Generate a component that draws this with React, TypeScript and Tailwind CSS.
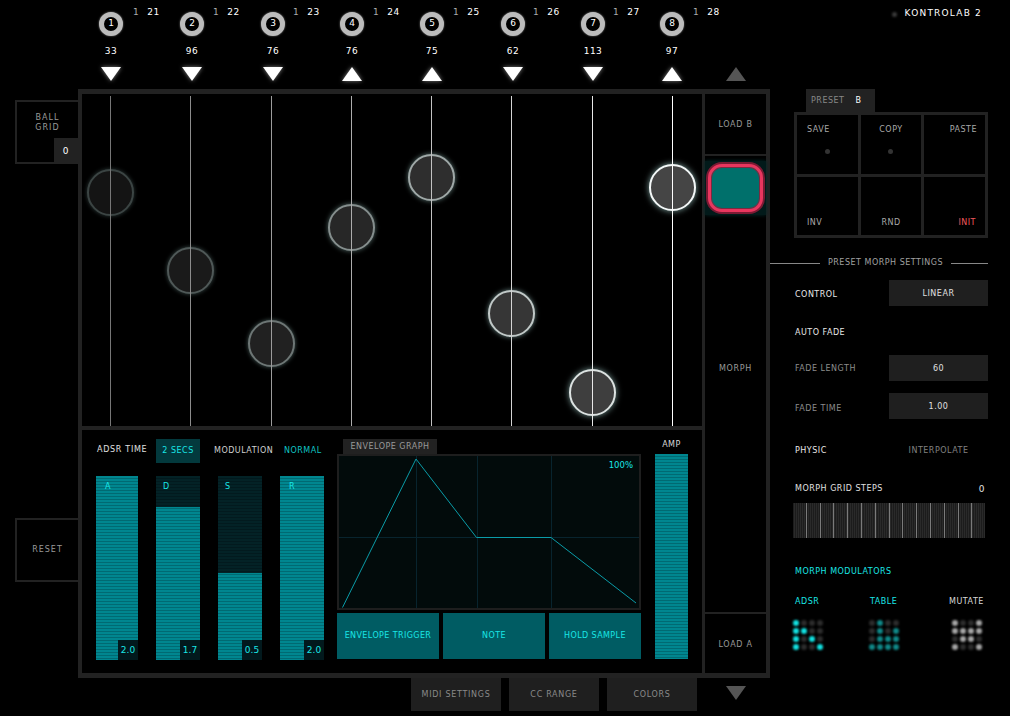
const channels = [
  { n: 1, cc: 21, value: 33, up: false, shift: 'ml-0' },
  { n: 2, cc: 22, value: 96, up: false, shift: 'ml-[1px]' },
  { n: 3, cc: 23, value: 76, up: false, shift: 'ml-[2px]' },
  { n: 4, cc: 24, value: 76, up: true, shift: 'ml-[1px]' },
  { n: 5, cc: 25, value: 75, up: true, shift: 'ml-[1px]' },
  { n: 6, cc: 26, value: 62, up: false, shift: 'ml-[2px]' },
  { n: 7, cc: 27, value: 113, up: false, shift: 'ml-[2px]' },
  { n: 8, cc: 28, value: 97, up: true, shift: 'ml-[1px]' },
]

const strings = [
  { x: 'left-[28px]', line: 'bg-[#777]' },
  { x: 'left-[108px]', line: 'bg-[#8c8c8c]' },
  { x: 'left-[189px]', line: 'bg-[#9c9c9c]' },
  { x: 'left-[269px]', line: 'bg-[#adadad]' },
  { x: 'left-[349px]', line: 'bg-[#c2c2c2]' },
  { x: 'left-[429px]', line: 'bg-[#d4d4d4]' },
  { x: 'left-[510px]', line: 'bg-[#e8e8e8]' },
  { x: 'left-[590px]', line: 'bg-white' },
]

const balls = [
  'left-[5px] top-[75px] bg-[#141414] border-[#3b4443] shadow-[0_0_4px_#2d3a39]',
  'left-[85px] top-[153px] bg-[#1a1a1a] border-[#4f5857] shadow-[0_0_4px_#3a4a49]',
  'left-[166px] top-[226px] bg-[#212121] border-[#6d7675] shadow-[0_0_4px_#465a58]',
  'left-[246px] top-[110px] bg-[#272727] border-[#858e8d] shadow-[0_0_5px_#526866]',
  'left-[326px] top-[60px] bg-[#2e2e2e] border-[#9fa8a7] shadow-[0_0_5px_#5c7472]',
  'left-[406px] top-[196px] bg-[#363636] border-[#c0c8c7] shadow-[0_0_5px_#688280]',
  'left-[487px] top-[275px] bg-[#3e3e3e] border-[#dce2e1] shadow-[0_0_6px_#749290]',
  'left-[567px] top-[70px] bg-[#454545] border-[#f4f8f8] shadow-[0_0_6px_#80a2a0]',
]

const stripe = 'bg-[repeating-linear-gradient(180deg,#00868f_0,#00868f_2px,#006a72_2px,#006a72_3px)]'

const adsr = [
  { label: 'A', value: '2.0', width: 'w-[42px]', gap: 'ml-0', empty: 'h-0', labelX: 'left-[9px]' },
  { label: 'D', value: '1.7', width: 'w-[44px]', gap: 'ml-[18px]', empty: 'h-[31px]', labelX: 'left-[7px]' },
  { label: 'S', value: '0.5', width: 'w-[44px]', gap: 'ml-[18px]', empty: 'h-[97px]', labelX: 'left-[7px]' },
  { label: 'R', value: '2.0', width: 'w-[44px]', gap: 'ml-[18px]', empty: 'h-0', labelX: 'left-[9px]' },
]

const presetCells = [
  { label: 'SAVE', dot: '-translate-x-[5px]', align: 'items-start pl-[10px]', text: 'text-[#a8a8a8]', top: true },
  { label: 'COPY', dot: 'translate-x-0', align: 'items-center', text: 'text-[#a8a8a8]', top: true },
  { label: 'PASTE', dot: '', align: 'items-end pr-[8px]', text: 'text-[#a8a8a8]', top: true },
  { label: 'INV', dot: '', align: 'items-start pl-[10px]', text: 'text-[#a8a8a8]', top: false },
  { label: 'RND', dot: '', align: 'items-center', text: 'text-[#a8a8a8]', top: false },
  { label: 'INIT', dot: '', align: 'items-end pr-[9px]', text: 'text-[#f0585c]', top: false },
]

const modulators = [
  {
    label: 'ADSR',
    labelClass: 'ml-[2px] text-[#19e6e6]',
    on: 'bg-[#12e4e4]',
    shift: 'ml-0',
    rows: ['1000', '1100', '1010', '1001'],
  },
  {
    label: 'TABLE',
    labelClass: 'ml-px text-[#19e6e6]',
    on: 'bg-[#108a8a]',
    shift: 'ml-[46px]',
    rows: ['0100', '0101', '0111', '1111'],
  },
  {
    label: 'MUTATE',
    labelClass: '-ml-[3px] text-[#d8d8d8]',
    on: 'bg-[#a8a8a8]',
    shift: 'ml-[53px]',
    rows: ['1001', '1111', '0110', '1001'],
  },
]

function Triangle({ up, muted }: { readonly up: boolean; readonly muted?: boolean }) {
  const fill = muted ? '#555' : '#fff'
  return (
    <svg width="22" height="16" viewBox="0 0 22 16" className={muted ? '' : 'drop-shadow-[0_0_2px_rgba(255,255,255,0.5)]'}>
      <polygon points={up ? '11,1 21,15 1,15' : '1,1 21,1 11,15'} fill={fill} />
    </svg>
  )
}

function Channel({ n, cc, value, up, shift, last }: (typeof channels)[number] & { readonly last?: boolean }) {
  return (
    <div className={`relative ${last ? 'w-[60px]' : 'w-[80px]'}`}>
      <div className={`flex w-[24px] flex-col items-center pt-[12px] ${shift}`}>
        <div className="flex h-[24px] w-[24px] items-center justify-center rounded-full border-[5px] border-[#bcbcbc] bg-black text-[9px] text-white shadow-[0_0_2px_#888]">
          {n}
        </div>
        <span className="mt-[9px] h-[12px] text-[9px] leading-[12px] tracking-[0.5px] text-white">{value}</span>
        <div className="mt-[9px]">
          <Triangle up={up} />
        </div>
      </div>
      <div className="absolute left-[34px] top-[6px] flex gap-[8px] text-[9px] leading-[12px] tracking-[0.5px]">
        <span className="text-[#aaa]">1</span>
        <span className="text-white">{cc}</span>
      </div>
    </div>
  )
}

function Header() {
  return (
    <div className="flex h-[89px] shrink-0 pl-[99px]">
      {channels.map((channel, i) => (
        <Channel key={channel.n} {...channel} last={i === 7} />
      ))}
      <div className="ml-[6px] pt-[66px]">
        <Triangle up muted />
      </div>
      <div className="ml-auto flex h-[28px] items-center pr-[28px] text-[9px] tracking-[1.2px] text-white">
        <span className="mr-[8px] h-[5px] w-[5px] rounded-full bg-[#3a3a3a] blur-[1px]" />
        KONTROLAB 2
      </div>
    </div>
  )
}

function SideBox({ label, children, className }: { readonly label: string; readonly children?: React.ReactNode; readonly className: string }) {
  return (
    <div className={`relative flex h-[64px] w-[63px] flex-col items-center border-2 border-r-0 border-[#222] text-center text-[8px] leading-[10px] tracking-[1px] text-[#999] ${className}`}>
      {label}
      {children}
    </div>
  )
}

function BallCanvas() {
  return (
    <div className="relative h-[333px] overflow-hidden">
      {balls.map((ball) => (
        <div key={ball} className={`absolute h-[47px] w-[47px] rounded-full border-2 blur-[0.5px] ${ball}`} />
      ))}
      {strings.map((s) => (
        <div key={s.x} className={`absolute top-[2px] bottom-0 w-px ${s.x} ${s.line}`} />
      ))}
    </div>
  )
}

function AdsrBar({ label, value, width, gap, empty, labelX }: (typeof adsr)[number]) {
  return (
    <div className={`relative flex h-[184px] flex-col ${width} ${gap} ${stripe}`}>
      <div className={`w-full bg-[repeating-linear-gradient(180deg,#032226_0,#032226_2px,#021a1e_2px,#021a1e_3px)] ${empty}`} />
      <span className={`absolute top-[6px] text-[8px] leading-[10px] text-[#19e6e6] ${labelX}`}>{label}</span>
      <span className="absolute bottom-0 right-0 flex h-[20px] w-[20px] items-center justify-center bg-[#02191d] text-[9px] text-[#19e6e6]">{value}</span>
    </div>
  )
}

function EnvelopeGraph() {
  return (
    <svg width="304" height="156" viewBox="0 0 300 152" className="block border-2 border-[#1e1e1e] bg-[#020b0b]">
      <g stroke="#08242e" strokeWidth="1">
        <line x1="77.5" y1="0" x2="77.5" y2="152" />
        <line x1="138.5" y1="0" x2="138.5" y2="152" />
        <line x1="212.5" y1="0" x2="212.5" y2="152" />
        <line x1="0" y1="81.5" x2="300" y2="81.5" />
      </g>
      <polyline points="3.5,151.5 77,3 137.5,81.5 212,81.5 297,147" fill="none" stroke="#0a9ca8" strokeWidth="1" />
      <text x="294" y="12" textAnchor="end" fontSize="8.5" fill="#19e6e6" fontFamily="DejaVu Sans">
        100%
      </text>
    </svg>
  )
}

function EnvelopeButton({ label, className }: { readonly label: string; readonly className: string }) {
  return (
    <div className={`flex h-[46px] items-center justify-center bg-[#005c63] text-[8px] tracking-[0.4px] text-[#19e6e6] ${className}`}>
      {label}
    </div>
  )
}

function LowerPanel() {
  return (
    <div className="flex h-[243px] pl-[14px]">
      <div className="w-[241px] shrink-0">
        <div className="flex h-[46px] items-start pt-[9px] text-[8px] tracking-[0.5px]">
          <span className="mt-[6px] w-[59px] pl-px leading-[10px] tracking-[0.7px] text-[#e0e0e0]">ADSR TIME</span>
          <span className="ml-px flex h-[24px] w-[44px] items-center justify-center bg-[#03393d] text-[#19e6e6]">2 SECS</span>
          <span className="ml-[14px] mt-[7px] w-[70px] leading-[10px] text-[#d0d0d0]">MODULATION</span>
          <span className="mt-[7px] leading-[10px] text-[#0fc4c4]">NORMAL</span>
        </div>
        <div className="flex">
          {adsr.map((bar) => (
            <AdsrBar key={bar.label} {...bar} />
          ))}
        </div>
      </div>
      <div className="w-[304px] shrink-0 pt-[9px]">
        <div className="ml-[6px] flex h-[15px] w-[94px] items-center justify-center bg-[#222] text-[8px] tracking-[0.5px] text-[#999]">
          ENVELOPE GRAPH
        </div>
        <EnvelopeGraph />
        <div className="mt-[3px] flex gap-[4px]">
          <EnvelopeButton label="ENVELOPE TRIGGER" className="w-[102px]" />
          <EnvelopeButton label="NOTE" className="w-[102px]" />
          <EnvelopeButton label="HOLD SAMPLE" className="w-[92px]" />
        </div>
      </div>
      <div className="ml-[14px] w-[33px] shrink-0">
        <div className="flex h-[24px] items-end justify-center pb-[4px] text-[8px] leading-[10px] tracking-[0.5px] text-[#d8d8d8]">AMP</div>
        <div className={`h-[205px] ${stripe}`} />
      </div>
    </div>
  )
}

function MorphColumn() {
  return (
    <div className="box-content flex w-[61px] shrink-0 flex-col border-l-[3px] border-[#222] text-[8px] tracking-[0.7px] text-[#999]">
      <div className="flex h-[62px] shrink-0 items-center justify-center border-b-2 border-[#222] pt-[2px]">LOAD B</div>
      <div className="flex flex-1 flex-col items-center pt-[5px]">
        <div className="flex h-[54px] w-[61px] items-center justify-center bg-[#021a1a] shadow-[0_0_4px_#012a2a]">
          <div className="h-[48px] w-[55px] rounded-[14px] border-[3px] border-[#e8365e] bg-[#00706b] shadow-[0_0_0_2px_#7a1a33,inset_0_0_0_1px_#7a2a40]" />
        </div>
        <span className="mt-[148px]">MORPH</span>
      </div>
      <div className="flex h-[61px] shrink-0 items-center justify-center border-t-2 border-[#222] pt-[2px]">LOAD A</div>
    </div>
  )
}

function PresetPanel() {
  return (
    <div>
      <div className="ml-[36px] flex h-[23px] w-[69px] items-center bg-[#222] pl-[5px] text-[8px] tracking-[0.5px]">
        <span className="text-[#888]">PRESET</span>
        <span className="ml-[11px] text-white">B</span>
      </div>
      <div className="ml-[24px] grid h-[126px] w-[194px] grid-cols-3 grid-rows-2 gap-[3px] bg-[#222] p-[3px]">
        {presetCells.map((cell) => (
          <div
            key={cell.label}
            className={`flex flex-col bg-black text-[8px] leading-[10px] tracking-[0.5px] ${cell.align} ${cell.text} ${cell.top ? 'pt-[10px]' : 'justify-end pb-[7px]'}`}
          >
            {cell.label}
            {cell.dot ? <span className={`mt-[14px] h-[5px] w-[5px] self-center rounded-full bg-[#333] blur-[0.5px] ${cell.dot}`} /> : null}
          </div>
        ))}
      </div>
    </div>
  )
}

function SettingRow({ label, value, labelClass, className }: { readonly label: string; readonly value: string; readonly labelClass: string; readonly className: string }) {
  return (
    <div className={`flex h-[26px] items-center justify-between pl-[25px] text-[8px] tracking-[0.5px] ${className}`}>
      <span className={labelClass}>{label}</span>
      <span className="flex h-[26px] w-[99px] items-center justify-center bg-[#1f1f1f] pt-[2px] text-[#e0e0e0]">{value}</span>
    </div>
  )
}

function DotGrid({ rows, on }: { readonly rows: string[]; readonly on: string }) {
  return (
    <div className="grid w-[30px] grid-cols-4 gap-[2px]">
      {rows.flatMap((row, r) =>
        row.split('').map((bit, c) => (
          <span key={`${r}-${c}`} className={`h-[6px] w-[6px] rounded-full blur-[0.8px] ${bit === '1' ? on : 'bg-[#2c2c2c]'}`} />
        )),
      )}
    </div>
  )
}

function MorphSettings() {
  return (
    <div className="w-[218px]">
      <div className="mt-[19px] flex h-[12px] items-center text-[8px] tracking-[0.5px] text-[#a0a0a0]">
        <span className="h-px w-[50px] bg-[#888]" />
        <span className="mx-auto">PRESET MORPH SETTINGS</span>
        <span className="h-px w-[37px] bg-[#888]" />
      </div>
      <SettingRow label="CONTROL" value="LINEAR" labelClass="pt-[4px] text-[#e8e8e8]" className="mt-[11px]" />
      <div className="mt-[22px] h-[10px] pl-[25px] text-[8px] leading-[10px] tracking-[0.5px] text-[#e8e8e8]">AUTO FADE</div>
      <SettingRow label="FADE LENGTH" value="60" labelClass="pt-[2px] text-[#8c8c8c]" className="mt-[17px]" />
      <SettingRow label="FADE TIME" value="1.00" labelClass="pt-[6px] text-[#8c8c8c]" className="mt-[12px]" />
      <div className="mt-[27px] flex h-[10px] items-center pl-[25px] text-[8px] leading-[10px] tracking-[0.5px]">
        <span className="text-[#e8e8e8]">PHYSIC</span>
        <span className="ml-auto w-[99px] text-center text-[#808080]">INTERPOLATE</span>
      </div>
      <div className="mt-[28px] flex h-[10px] items-center justify-between pl-[25px] text-[8px] leading-[10px] tracking-[0.5px] text-[#e0e0e0]">
        <span>MORPH GRID STEPS</span>
        <span className="mr-[3px] text-[9px]">0</span>
      </div>
      <div className="ml-[23px] mt-[9px] h-[35px] w-[192px] bg-[repeating-linear-gradient(90deg,transparent_0,transparent_12.8px,#7a7a7a_12.8px,#7a7a7a_13.8px),repeating-linear-gradient(90deg,#1c1c1c_0,#1c1c1c_1px,#2a2a2a_1px,#2a2a2a_2px)]" />
      <div className="mt-[29px] h-[10px] pl-[25px] text-[8px] leading-[10px] tracking-[0.5px] text-[#19e6e6]">MORPH MODULATORS</div>
      <div className="mt-[20px] flex pl-[23px]">
        {modulators.map((mod) => (
          <div key={mod.label} className={`w-[30px] shrink-0 ${mod.shift}`}>
            <div className={`h-[10px] whitespace-nowrap text-[8px] leading-[10px] tracking-[0.5px] ${mod.labelClass}`}>{mod.label}</div>
            <div className="mt-[13px]">
              <DotGrid rows={mod.rows} on={mod.on} />
            </div>
          </div>
        ))}
      </div>
    </div>
  )
}

function FooterTabs() {
  return (
    <div className="flex items-start">
      <div className="ml-[411px] flex gap-[8px]">
        {['MIDI SETTINGS', 'CC RANGE', 'COLORS'].map((label) => (
          <div key={label} className="flex h-[33px] w-[90px] items-center justify-center bg-[#1f1f1f] text-[8px] tracking-[0.7px] text-[#8a8a8a]">
            {label}
          </div>
        ))}
      </div>
      <div className="ml-[28px] mt-[7px]">
        <Triangle up={false} muted />
      </div>
    </div>
  )
}

export default function App() {
  return (
    <div className="flex h-[716px] w-[1010px] flex-col overflow-hidden bg-black font-['DejaVu_Sans',sans-serif]">
      <Header />
      <div className="flex h-[589px] shrink-0">
        <div className="flex w-[78px] shrink-0 flex-col pl-[15px] pt-[11px]">
          <SideBox label="BALL GRID" className="px-[14px] pt-[11px]">
            <span className="absolute -bottom-[2px] right-0 flex h-[26px] w-[24px] items-center justify-center bg-[#222] text-[9px] text-white">0</span>
          </SideBox>
          <SideBox label="RESET" className="mt-[354px] justify-center" />
        </div>
        <div className="flex h-[589px] w-[692px] shrink-0 border-4 border-t-[5px] border-b-[5px] border-[#222]">
          <div className="flex w-[620px] shrink-0 flex-col">
            <BallCanvas />
            <div className="h-[4px] bg-[#222]" />
            <LowerPanel />
          </div>
          <MorphColumn />
        </div>
        <div className="flex-1">
          <PresetPanel />
          <MorphSettings />
        </div>
      </div>
      <FooterTabs />
    </div>
  )
}
